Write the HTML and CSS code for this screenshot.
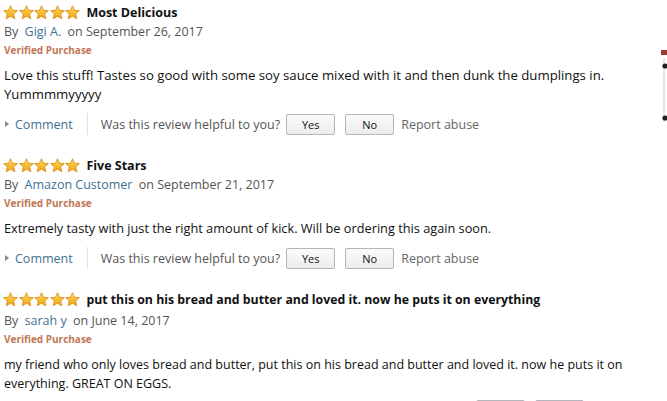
FILE: index.html
```html
<!DOCTYPE html>
<html>
<head>
<meta charset="utf-8">
<link rel="stylesheet" href="styles.css">
</head>
<body>
<svg width="0" height="0" class="defs">
  <defs>
    <linearGradient id="sg" x1="0" y1="0" x2="0" y2="1">
      <stop offset="0" stop-color="#fde38a"/>
      <stop offset="0.55" stop-color="#f7bd2c"/>
      <stop offset="1" stop-color="#eda21b"/>
    </linearGradient>
    <symbol id="star" viewBox="0 0 16 16">
      <polygon points="8,0.8 10.1,5.6 15.3,6 11.3,9.5 12.6,14.7 8,11.9 3.4,14.7 4.7,9.5 0.7,6 5.9,5.6" fill="url(#sg)" stroke="#d98a12" stroke-width="0.9" stroke-linejoin="round"/>
    </symbol>
  </defs>
</svg>

<div class="page">
  <div class="review">
    <div class="title-row">
      <span class="stars"><svg><use href="#star"/></svg><svg><use href="#star"/></svg><svg><use href="#star"/></svg><svg><use href="#star"/></svg><svg><use href="#star"/></svg></span>
      <span class="title">Most Delicious</span>
    </div>
    <div class="by">By <a class="author">Gigi A.</a> on September 26, 2017</div>
    <div class="verified">Verified Purchase</div>
    <div class="body body-wide">Love this stuff! Tastes so good with some soy sauce mixed with it and then dunk the dumplings in.<br>Yummmmyyyyy</div>
    <div class="actions">
      <span class="comment"><span class="tri"></span>Comment</span>
      <span class="sep"></span>
      <span class="helpful">Was this review helpful to you?</span>
      <span class="btn">Yes</span>
      <span class="btn">No</span>
      <span class="report">Report abuse</span>
    </div>
  </div>

  <div class="review">
    <div class="title-row">
      <span class="stars"><svg><use href="#star"/></svg><svg><use href="#star"/></svg><svg><use href="#star"/></svg><svg><use href="#star"/></svg><svg><use href="#star"/></svg></span>
      <span class="title">Five Stars</span>
    </div>
    <div class="by">By <a class="author">Amazon Customer</a> on September 21, 2017</div>
    <div class="verified">Verified Purchase</div>
    <div class="body body-mid">Extremely tasty with just the right amount of kick. Will be ordering this again soon.</div>
    <div class="actions">
      <span class="comment"><span class="tri"></span>Comment</span>
      <span class="sep"></span>
      <span class="helpful">Was this review helpful to you?</span>
      <span class="btn">Yes</span>
      <span class="btn">No</span>
      <span class="report">Report abuse</span>
    </div>
  </div>

  <div class="review review-narrow">
    <div class="title-row">
      <span class="stars"><svg><use href="#star"/></svg><svg><use href="#star"/></svg><svg><use href="#star"/></svg><svg><use href="#star"/></svg><svg><use href="#star"/></svg></span>
      <span class="title">put this on his bread and butter and loved it. now he puts it on everything</span>
    </div>
    <div class="by">By <a class="author">sarah y</a> on June 14, 2017</div>
    <div class="verified">Verified Purchase</div>
    <div class="body">my friend who only loves bread and butter, put this on his bread and butter and loved it. now he puts it on<br>everything. GREAT ON EGGS.</div>
    <div class="actions actions-cut">
      <span class="btn"></span>
      <span class="btn"></span>
    </div>
  </div>

  <svg class="edge" width="8" height="80" viewBox="0 0 8 80">
    <rect x="2" y="0" width="6" height="5" fill="#9b3b33"/>
    <line x1="5" y1="8" x2="5" y2="72" stroke="#ccc" stroke-width="1"/>
    <circle cx="6" cy="16" r="2.6" fill="#222"/>
    <circle cx="6" cy="68" r="2.6" fill="#222"/>
  </svg>
</div>
</body>
</html>
```

FILE: styles.css
```css
html, body {
  margin: 0;
  padding: 0;
  background: #fff;
  overflow: hidden;
}
.defs {
  position: absolute;
  width: 0;
  height: 0;
}
.page {
  position: relative;
  width: 667px;
  height: 401px;
  overflow: hidden;
  padding: 3px 0 0 4px;
  box-sizing: border-box;
  font-family: "Open Sans", "DejaVu Sans", sans-serif;
  font-size: 12.5px;
  color: #111;
}
.review {
  margin-bottom: 21px;
}
.title-row {
  display: flex;
  align-items: center;
  height: 19px;
}
.stars {
  display: flex;
  gap: 0.6px;
  margin-left: -1px;
  margin-right: 6px;
}
.stars svg {
  width: 15px;
  height: 15px;
}
.title {
  font-weight: 700;
  font-size: 12.5px;
  color: #111;
}
.review-narrow .title {
  font-size: 12.3px;
}
.by {
  height: 19px;
  line-height: 19px;
  color: #555;
}
.review-narrow .by {
  margin-top: 2px;
}
.author {
  color: #3f7293;
  margin: 0 3px;
}
.verified {
  height: 19px;
  line-height: 19px;
  font-size: 10px;
  font-weight: 700;
  color: #c27756;
}
.body {
  margin-top: 6px;
  line-height: 19px;
  color: #111;
}
.body-wide {
  font-size: 13.2px;
}
.body-mid {
  font-size: 12.75px;
}
.actions {
  display: flex;
  align-items: center;
  height: 22px;
  margin-top: 9px;
  color: #555;
}
.actions-cut {
  margin-top: 6px;
  padding-left: 466px;
}
.comment {
  display: flex;
  align-items: center;
  color: #3f7293;
}
.tri {
  width: 0;
  height: 0;
  border-left: 4px solid #888;
  border-top: 3px solid transparent;
  border-bottom: 3px solid transparent;
  margin: 0 6px 0 1px;
}
.sep {
  width: 1px;
  height: 22px;
  background: #e2e2e2;
  margin: 0 13px 0 14px;
}
.btn {
  box-sizing: border-box;
  width: 49px;
  height: 21px;
  display: flex;
  align-items: center;
  justify-content: center;
  border: 1px solid #b3b6bb;
  border-radius: 2px;
  background: linear-gradient(#fbfbfb, #ececec);
  color: #111;
  font-size: 11px;
  margin-left: 6px;
  margin-right: 4px;
}
.report {
  margin-left: 3px;
  color: #666;
}
.edge {
  position: absolute;
  right: 0;
  top: 50px;
}
```
